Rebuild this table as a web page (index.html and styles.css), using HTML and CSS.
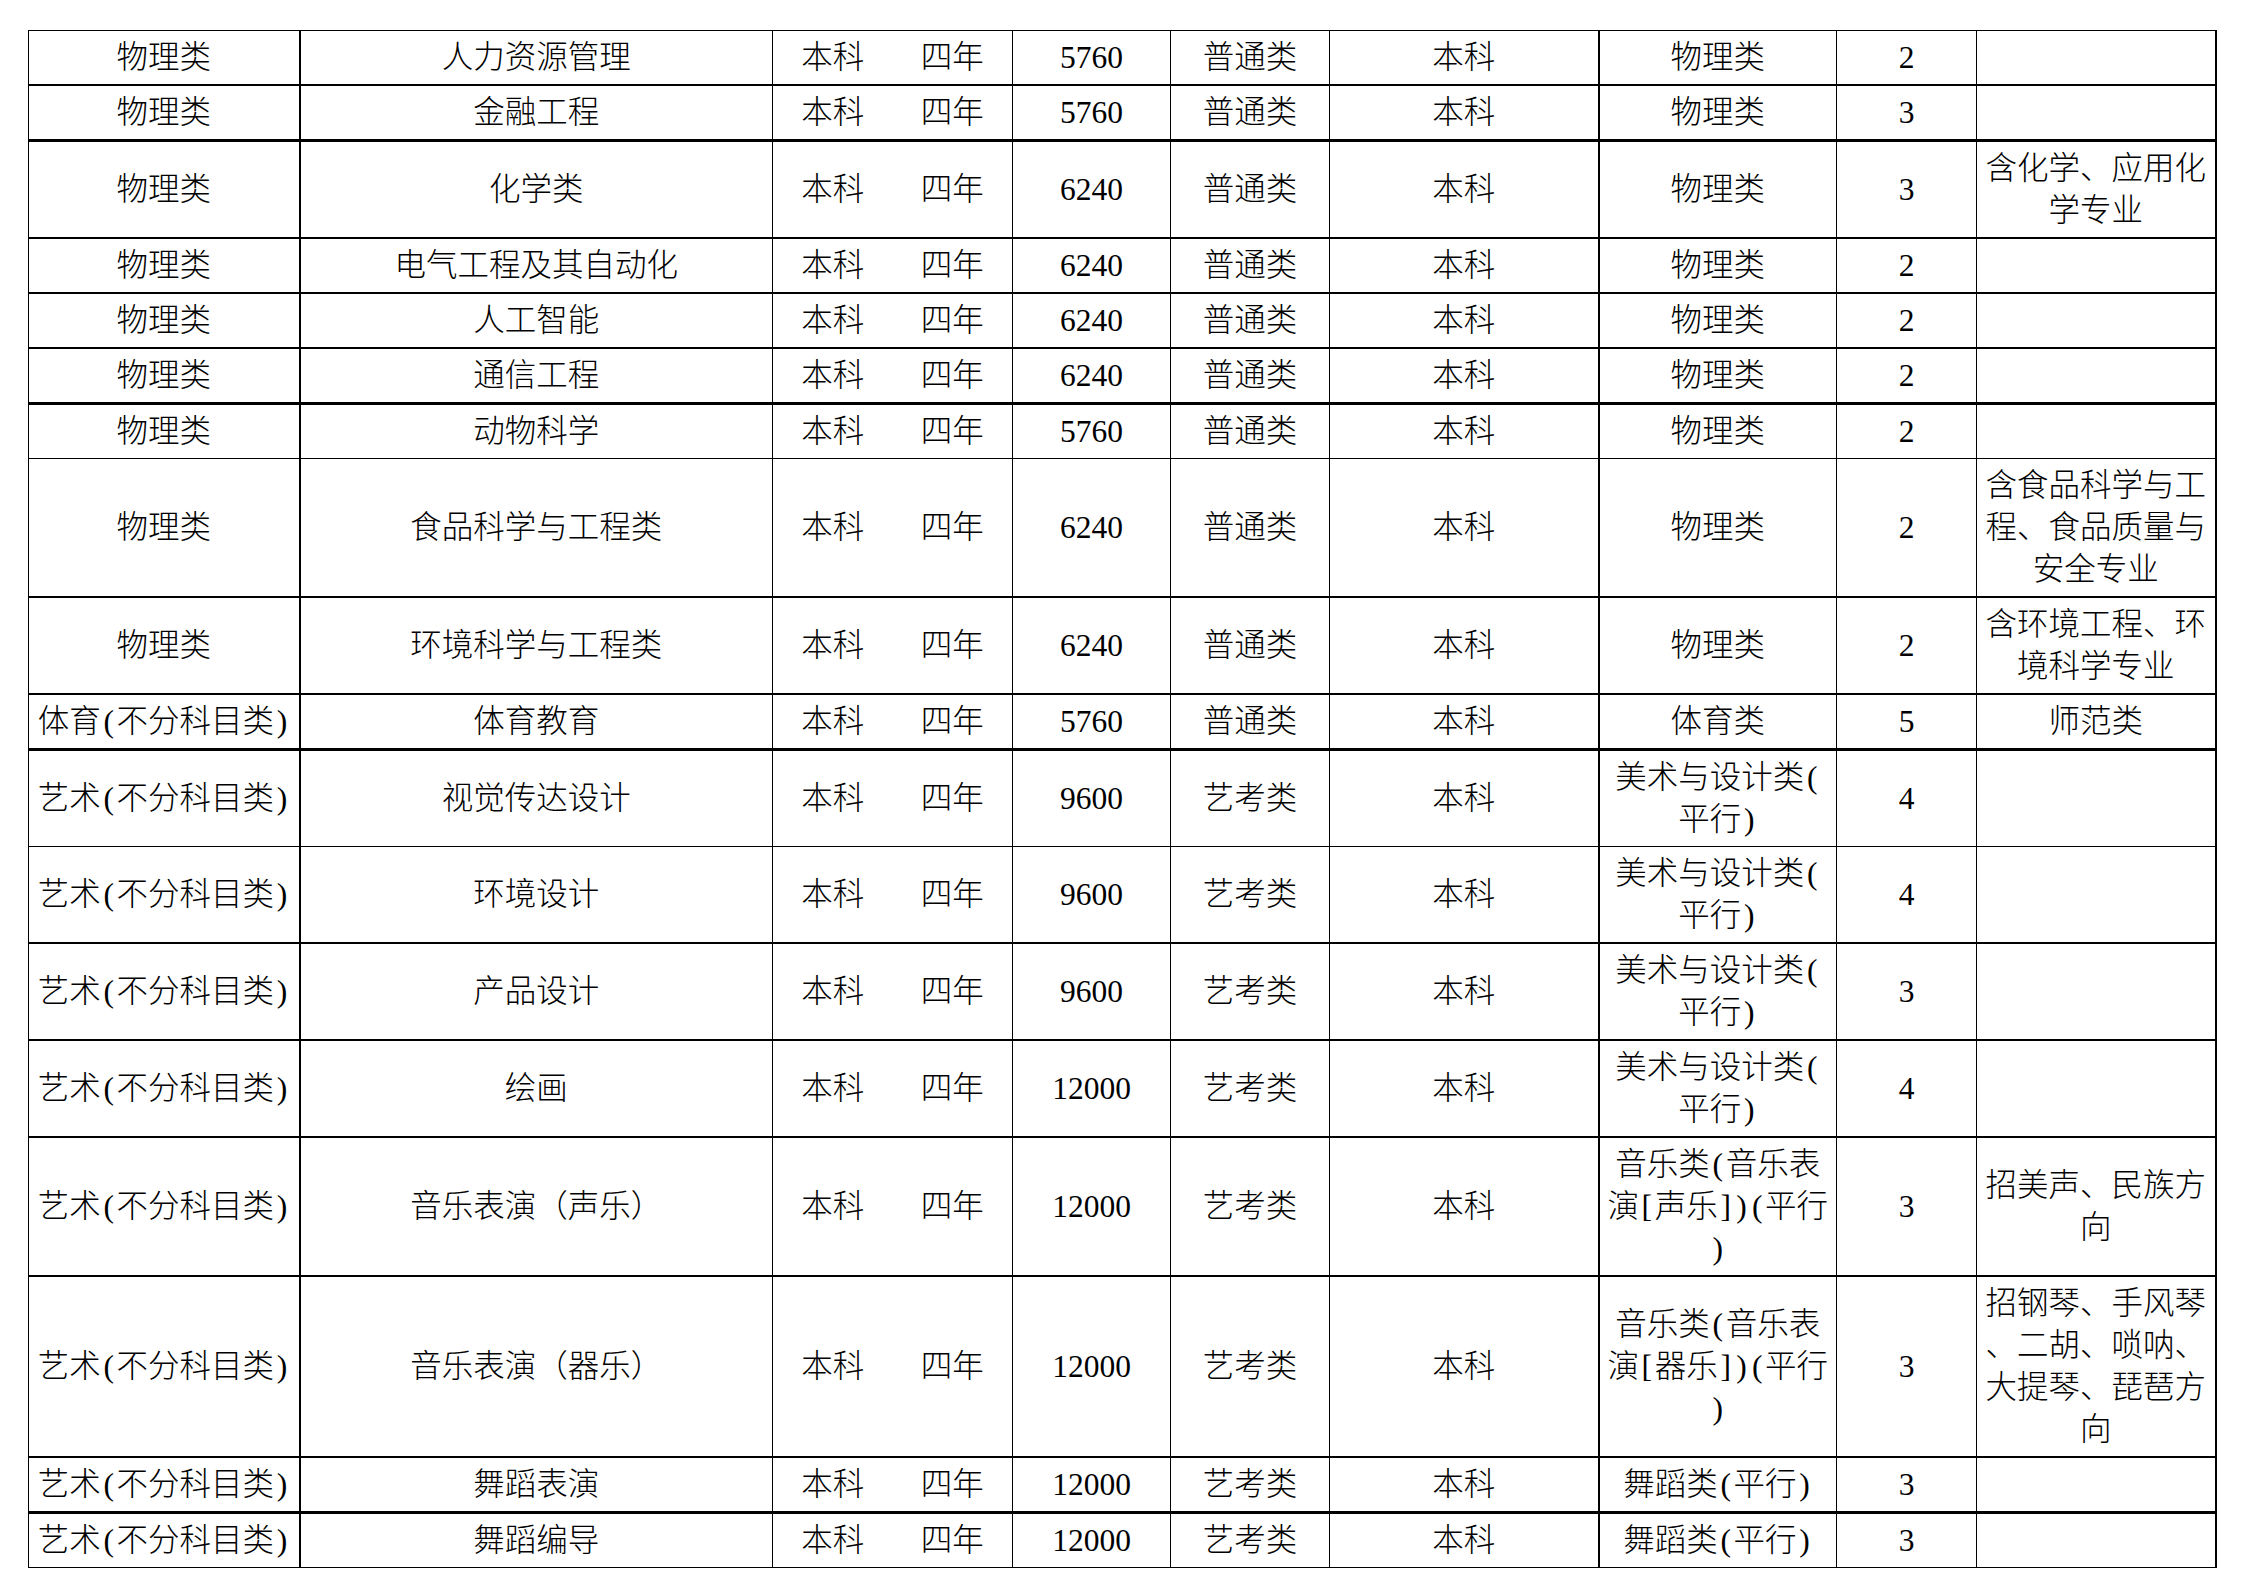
FILE: index.html
```html
<!DOCTYPE html>
<html lang="zh-CN">
<head>
<meta charset="utf-8">
<title>专业表</title>
<link rel="stylesheet" href="styles.css">
</head>
<body>
<table class="grid">
  <colgroup>
    <col class="w1"><col class="w2"><col class="w3"><col class="w4"><col class="w5">
    <col class="w6"><col class="w7"><col class="w8"><col class="w9"><col class="w10">
  </colgroup>
  <tbody>
    <tr class="b2"><td>物理类</td><td>人力资源管理</td><td>本科</td><td>四年</td><td>5760</td><td>普通类</td><td>本科</td><td>物理类</td><td>2</td><td></td></tr>
    <tr class="b3"><td>物理类</td><td>金融工程</td><td>本科</td><td>四年</td><td>5760</td><td>普通类</td><td>本科</td><td>物理类</td><td>3</td><td></td></tr>
    <tr class="b2"><td>物理类</td><td>化学类</td><td>本科</td><td>四年</td><td>6240</td><td>普通类</td><td>本科</td><td>物理类</td><td>3</td><td>含化学、应用化<br>学专业</td></tr>
    <tr class="b2"><td>物理类</td><td>电气工程及其自动化</td><td>本科</td><td>四年</td><td>6240</td><td>普通类</td><td>本科</td><td>物理类</td><td>2</td><td></td></tr>
    <tr class="b2"><td>物理类</td><td>人工智能</td><td>本科</td><td>四年</td><td>6240</td><td>普通类</td><td>本科</td><td>物理类</td><td>2</td><td></td></tr>
    <tr class="b3"><td>物理类</td><td>通信工程</td><td>本科</td><td>四年</td><td>6240</td><td>普通类</td><td>本科</td><td>物理类</td><td>2</td><td></td></tr>
    <tr class="b1"><td>物理类</td><td>动物科学</td><td>本科</td><td>四年</td><td>5760</td><td>普通类</td><td>本科</td><td>物理类</td><td>2</td><td></td></tr>
    <tr class="b2"><td>物理类</td><td>食品科学与工程类</td><td>本科</td><td>四年</td><td>6240</td><td>普通类</td><td>本科</td><td>物理类</td><td>2</td><td>含食品科学与工<br>程、食品质量与<br>安全专业</td></tr>
    <tr class="b2"><td>物理类</td><td>环境科学与工程类</td><td>本科</td><td>四年</td><td>6240</td><td>普通类</td><td>本科</td><td>物理类</td><td>2</td><td>含环境工程、环<br>境科学专业</td></tr>
    <tr class="b3"><td>体育<span class="hw">(</span>不分科目类<span class="hw">)</span></td><td>体育教育</td><td>本科</td><td>四年</td><td>5760</td><td>普通类</td><td>本科</td><td>体育类</td><td>5</td><td>师范类</td></tr>
    <tr class="b1"><td>艺术<span class="hw">(</span>不分科目类<span class="hw">)</span></td><td>视觉传达设计</td><td>本科</td><td>四年</td><td>9600</td><td>艺考类</td><td>本科</td><td>美术与设计类<span class="hw">(</span><br>平行<span class="hw">)</span></td><td>4</td><td></td></tr>
    <tr class="b2"><td>艺术<span class="hw">(</span>不分科目类<span class="hw">)</span></td><td>环境设计</td><td>本科</td><td>四年</td><td>9600</td><td>艺考类</td><td>本科</td><td>美术与设计类<span class="hw">(</span><br>平行<span class="hw">)</span></td><td>4</td><td></td></tr>
    <tr class="b2"><td>艺术<span class="hw">(</span>不分科目类<span class="hw">)</span></td><td>产品设计</td><td>本科</td><td>四年</td><td>9600</td><td>艺考类</td><td>本科</td><td>美术与设计类<span class="hw">(</span><br>平行<span class="hw">)</span></td><td>3</td><td></td></tr>
    <tr class="b2"><td>艺术<span class="hw">(</span>不分科目类<span class="hw">)</span></td><td>绘画</td><td>本科</td><td>四年</td><td>12000</td><td>艺考类</td><td>本科</td><td>美术与设计类<span class="hw">(</span><br>平行<span class="hw">)</span></td><td>4</td><td></td></tr>
    <tr class="b2"><td>艺术<span class="hw">(</span>不分科目类<span class="hw">)</span></td><td>音乐表演（声乐）</td><td>本科</td><td>四年</td><td>12000</td><td>艺考类</td><td>本科</td><td>音乐类<span class="hw">(</span>音乐表<br>演<span class="hw">[</span>声乐<span class="hw">]</span><span class="hw">)</span><span class="hw">(</span>平行<br><span class="hw">)</span></td><td>3</td><td>招美声、民族方<br>向</td></tr>
    <tr class="b2"><td>艺术<span class="hw">(</span>不分科目类<span class="hw">)</span></td><td>音乐表演（器乐）</td><td>本科</td><td>四年</td><td>12000</td><td>艺考类</td><td>本科</td><td>音乐类<span class="hw">(</span>音乐表<br>演<span class="hw">[</span>器乐<span class="hw">]</span><span class="hw">)</span><span class="hw">(</span>平行<br><span class="hw">)</span></td><td>3</td><td>招钢琴、手风琴<br>、二胡、唢呐、<br>大提琴、琵琶方<br>向</td></tr>
    <tr class="b3"><td>艺术<span class="hw">(</span>不分科目类<span class="hw">)</span></td><td>舞蹈表演</td><td>本科</td><td>四年</td><td>12000</td><td>艺考类</td><td>本科</td><td>舞蹈类<span class="hw">(</span>平行<span class="hw">)</span></td><td>3</td><td></td></tr>
    <tr class="b1"><td>艺术<span class="hw">(</span>不分科目类<span class="hw">)</span></td><td>舞蹈编导</td><td>本科</td><td>四年</td><td>12000</td><td>艺考类</td><td>本科</td><td>舞蹈类<span class="hw">(</span>平行<span class="hw">)</span></td><td>3</td><td></td></tr>
  </tbody>
</table>
</body>
</html>
```
FILE: styles.css
```css
html, body {
  margin: 0;
  padding: 0;
  background: #fff;
}

body {
  padding: 30px 0 0 28px;
  font-family: "Liberation Serif", "Noto Sans CJK SC", serif;
  color: #000;
}

.grid {
  border-collapse: collapse;
  table-layout: fixed;
  width: 2187px;
  font-size: 31.5px;
  line-height: 42px;
  font-weight: 300;
}

.w1 { width: 271px; }
.w2 { width: 473px; }
.w3 { width: 120px; }
.w4 { width: 120px; }
.w5 { width: 158px; }
.w6 { width: 159px; }
.w7 { width: 269px; }
.w8 { width: 238px; }
.w9 { width: 140px; }
.w10 { width: 239px; }

.grid td {
  border: 1px solid #000;
  padding: 5.5px 2px;
  text-align: center;
  vertical-align: middle;
  white-space: nowrap;
}

.hw {
  display: inline-block;
  width: 0.5em;
  text-align: center;
}

.grid td:nth-child(1) { border-right-width: 2px; }
.grid td:nth-child(3) { border-right: none; }
.grid td:nth-child(4) { border-left: none; }
.grid td:nth-child(7) { border-right-width: 2px; }
.grid td:nth-child(10) { border-right-width: 2px; }

.grid tr.b1 td { border-bottom-width: 1px; }
.grid tr.b2 td { border-bottom-width: 2px; }
.grid tr.b3 td { border-bottom-width: 3px; }
```
